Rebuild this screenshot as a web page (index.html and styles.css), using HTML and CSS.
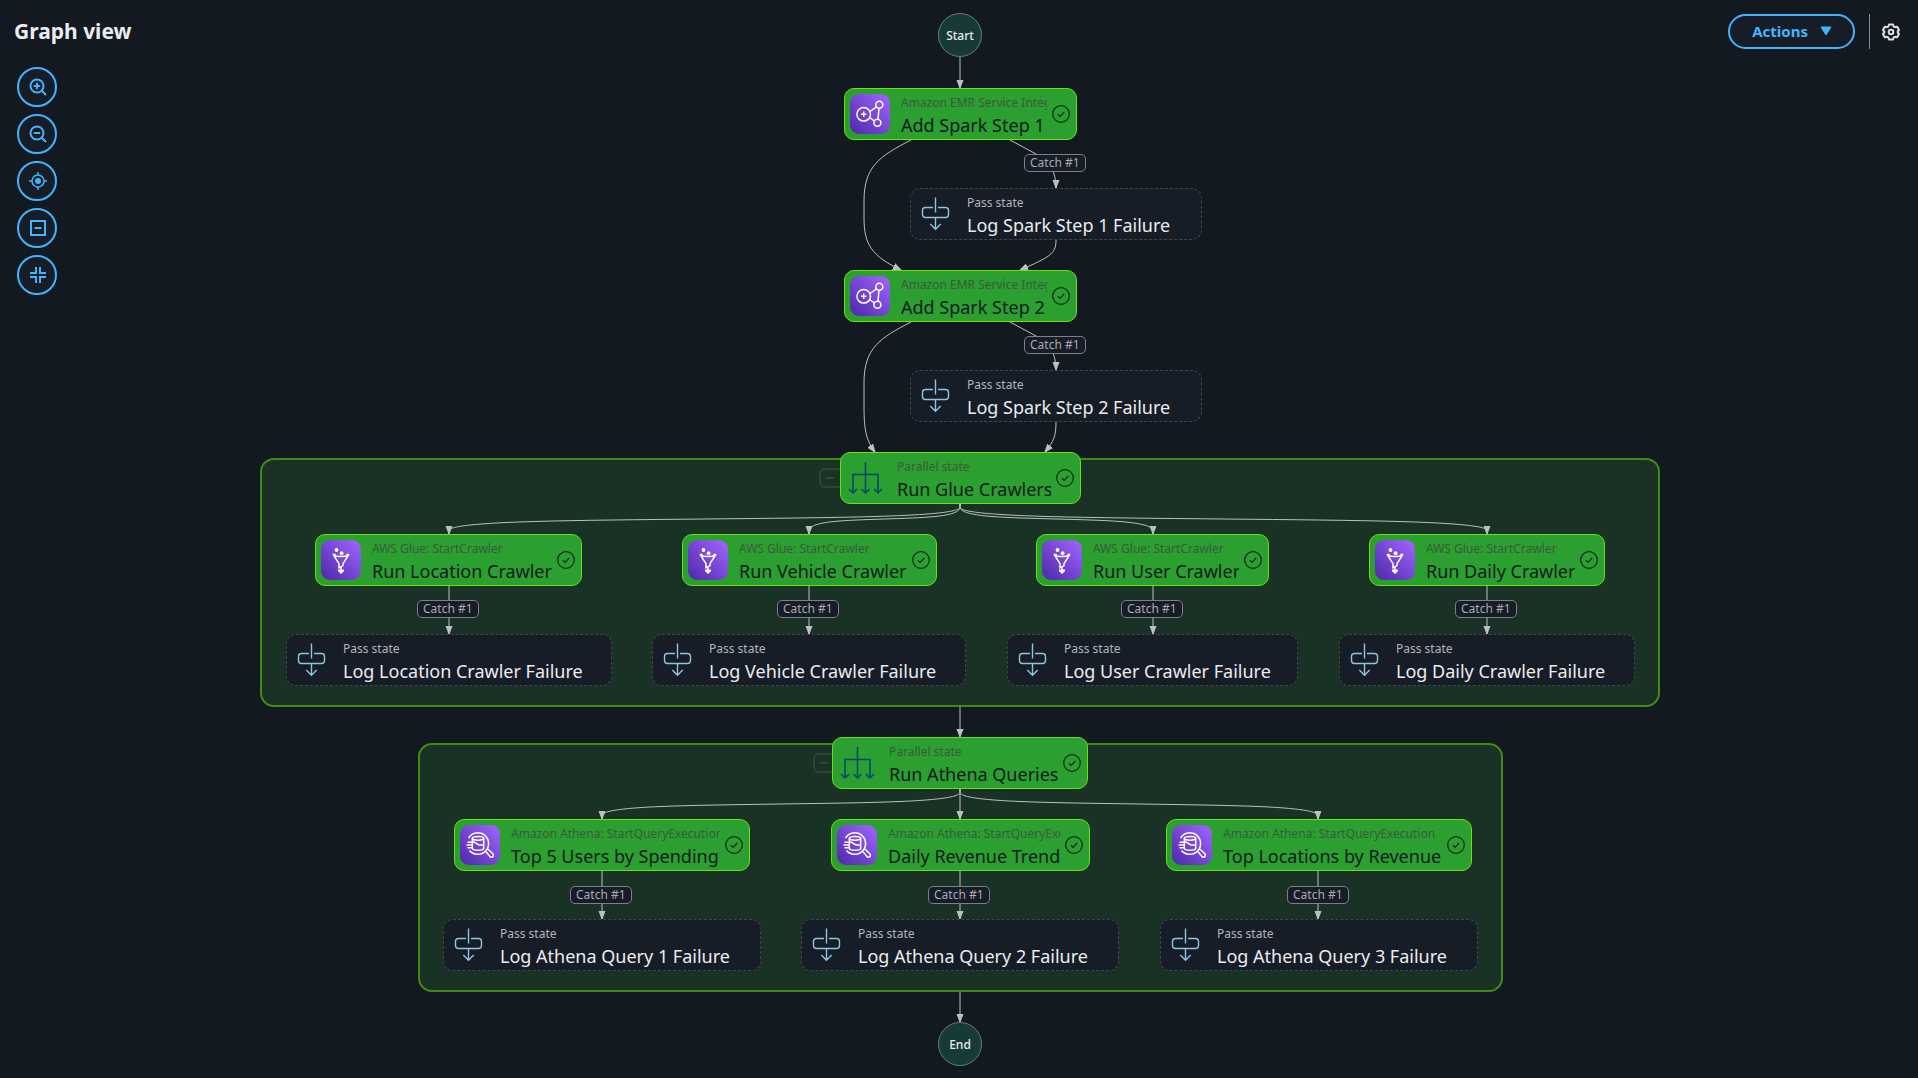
FILE: index.html
```html
<!DOCTYPE html>
<html lang="en">
<head>
<meta charset="utf-8">
<meta name="viewport" content="width=device-width, initial-scale=1">
<title>Graph view</title>
<link rel="stylesheet" href="styles.css">
</head>
<body>
<svg class="defs" aria-hidden="true">
  <defs>
    <linearGradient id="purple" x1="0" y1="1" x2="1" y2="0">
      <stop offset="0" stop-color="#4d27aa"/><stop offset="1" stop-color="#a166ff"/>
    </linearGradient>
    <symbol id="emr" viewBox="0 0 40 40">
      <rect width="40" height="40" rx="9" fill="url(#purple)"/>
      <g fill="none" stroke="#fff" stroke-width="1.5">
        <circle cx="13.7" cy="20.3" r="6.8"/><circle cx="29.3" cy="10.7" r="3.5"/><circle cx="27.4" cy="28.8" r="3.5"/>
        <path d="M20 17.5l6.500-4.600M19.600 23.500l4.700 3.300M29 14.200l-1 11.200M11 20.300h5.400M13.700 17.600v5.400"/>
      </g>
    </symbol>
    <symbol id="glue" viewBox="0 0 40 40">
      <rect width="40" height="40" rx="9" fill="url(#purple)"/>
      <g fill="none" stroke="#fff" stroke-width="1.500">
        <path d="M12.200 14.500L18 23.600v4.200l4-2.200v-2L27.800 14.500M12.500 15.500c3 1.300 12 1.300 15 0M11.700 14.500h3M25.300 14.500h3M20 27v5M17.200 30.200l2.800 2.800 2.800-2.800"/>
      </g>
      <g fill="#fff"><circle cx="15.500" cy="10" r="1.900"/><circle cx="20.600" cy="13.200" r="1.900"/><path d="M17 29.500h6l-3 4z"/></g>
    </symbol>
    <symbol id="athena" viewBox="0 0 40 40">
      <rect width="40" height="40" rx="9" fill="url(#purple)"/>
      <g fill="none" stroke="#fff" stroke-width="1.500">
        <path d="M8.500 13a10.800 10.800 0 1 1 1 12.500M25.500 26l2.200-2.200 5.100 5a1.800 1.800 0 0 1-2.800 2.800z"/>
        <ellipse cx="18" cy="13.300" rx="5.700" ry="1.900"/>
        <path d="M12.300 13.300v10c0 2.600 11.400 2.600 11.400 0v-10M13 16.500l6 3.500h5.500M7.500 17.300h4.500M6.500 20h5M7.500 22.700h4.500"/>
      </g>
    </symbol>
    <symbol id="pass" viewBox="0 0 40 40">
      <g fill="none" stroke="#8fc4e2" stroke-width="1.400">
        <path d="M19.500 3.500v15M17 13.500H9.500a3 3 0 0 0-3 3v4a3 3 0 0 0 3 3h20a3 3 0 0 0 3-3v-4a3 3 0 0 0-3-3H22M19.500 23.500v12M14.300 30.100l5.200 5.200 5.200-5.200"/>
      </g>
    </symbol>
    <symbol id="parallel" viewBox="0 0 40 40">
      <path fill="none" stroke="#05456b" stroke-width="1.500" d="M19.500 4v31M7 35V16.500h25V35M3 31l4 4 4-4M15.500 31l4 4 4-4M28 31l4 4 4-4"/>
    </symbol>
    <symbol id="check" viewBox="0 0 18 18">
      <g fill="none" stroke="#132a1c" stroke-width="1.200"><circle cx="9" cy="9" r="8.300"/><path d="M5.800 9.300l2.300 2.200 4.200-4.700"/></g>
    </symbol>
  </defs>
</svg>

<main class="view">
  <header class="bar">
    <h1 class="bar-title">Graph view</h1>
    <div class="bar-actions">
      <button class="actions" type="button">Actions
        <svg width="12" height="10" viewBox="0 0 12 10" aria-hidden="true"><path fill="#42b4ff" stroke="#42b4ff" stroke-linejoin="round" d="M1 1h10L6 9z"/></svg>
      </button>
      <span class="divider"></span>
      <button class="gear" type="button" aria-label="Settings">
        <svg width="18" height="18" viewBox="0 0 18 18" fill="none" stroke="#dedee3" stroke-width="2" stroke-linejoin="round"><path d="M7 1.500h4l.700 2 1.300.700 2.200-.500 1.800 3.300-1.300 1.500v1L17 11l-1.800 3.300-2.200-.500-1.300.700-.700 2H7l-.700-2-1.300-.700-2.200.500L1 11l1.300-1.500v-1L1 7l1.800-3.300L5 4.200l1.300-.700z"/><circle cx="9" cy="9" r="2.300"/></svg>
      </button>
    </div>
  </header>

  <nav class="tools" aria-label="Graph controls">
    <button class="tool" type="button" aria-label="Zoom in"><svg width="18" height="18" viewBox="0 0 18 18"><circle cx="8" cy="8" r="6.500"/><path d="M12.700 12.700l4.300 4.300M8 4.800v6.400M4.800 8h6.400"/></svg></button>
    <button class="tool" type="button" aria-label="Zoom out"><svg width="18" height="18" viewBox="0 0 18 18"><circle cx="8" cy="8" r="6.500"/><path d="M12.700 12.700l4.300 4.300M4.800 8h6.400"/></svg></button>
    <button class="tool" type="button" aria-label="Center graph"><svg class="thin" width="18" height="18" viewBox="0 0 18 18"><circle cx="9" cy="9" r="6"/><circle cx="9" cy="9" r="3" fill="#42b4ff" stroke="none"/><path d="M9 0v3M9 15v3M0 9h3M15 9h3"/></svg></button>
    <button class="tool" type="button" aria-label="Collapse all"><svg width="18" height="18" viewBox="0 0 18 18"><path d="M2 2h14v14H2zM5.500 9h7"/></svg></button>
    <button class="tool" type="button" aria-label="Exit full screen"><svg width="18" height="18" viewBox="0 0 18 18"><path d="M1 7h6V1M17 7h-6V1M1 11h6v6M17 11h-6v6"/></svg></button>
  </nav>

  <section class="graph" aria-label="Execution graph">
    <div class="group group-glue"></div>
    <div class="group group-athena"></div>
    <button class="collapse collapse-glue" type="button" aria-label="Collapse Run Glue Crawlers"></button>
    <button class="collapse collapse-athena" type="button" aria-label="Collapse Run Athena Queries"></button>

    <svg class="edges" viewBox="260 0 1398 1078" aria-hidden="true">
      <defs><marker id="arrow" markerUnits="userSpaceOnUse" markerWidth="8" markerHeight="8" refX="8" refY="4" orient="auto"><path d="M0 1L8 4L0 7z" fill="#bfbfbf"/></marker></defs>
      <path d="M960 57V88"/>
      <path d="M911 140C880 156 864 166 864 201V218C864 245 872 256 901 270"/>
      <path d="M1010 140L1036 154C1050 161 1056 172 1056 188"/>
      <path d="M1056 240C1056 254 1050 257 1020 270"/>
      <path d="M911 322C880 338 864 348 864 383V406C864 430 866 440 875 452"/>
      <path d="M1010 322L1036 336C1050 343 1056 354 1056 370"/>
      <path d="M1056 422C1056 436 1054 441 1045 452"/>
      <path d="M960 504V506.500C960 509 960 514 875 516.500S619 519 534 521.500S449 529 449 531V534"/>
      <path d="M960 504V506.500C960 509 960 514 935 516.500S859 519 834 521.500S809 529 809 531V534"/>
      <path d="M960 504V506.500C960 509 960 514 992 516.500S1088 519 1120 521.500S1153 529 1153 531V534"/>
      <path d="M960 504V506.500C960 509 960 514 1048 516.500S1311 519 1399 521.500S1487 529 1487 531V534"/>
      <path d="M449 586V634"/><path d="M809 586V634"/><path d="M1153 586V634"/><path d="M1487 586V634"/>
      <path d="M960 707V737"/>
      <path d="M960 789V791.500C960 794 960 799 900 801.500S721 804 661 806.500S602 814 602 816V819"/>
      <path d="M960 789V819"/>
      <path d="M960 789V791.500C960 794 960 799 1020 801.500S1198 804 1258 806.500S1318 814 1318 816V819"/>
      <path d="M602 871V919"/><path d="M960 871V919"/><path d="M1318 871V919"/>
      <path d="M960 992V1022"/>
    </svg>

    <div class="terminal start">Start</div>

    <article class="node done spark-1"><svg class="icon"><use href="#emr"/></svg><div class="text"><p class="kind">Amazon EMR Service Integration</p><h2 class="name">Add Spark Step 1</h2></div><svg class="check"><use href="#check"/></svg></article>
    <span class="catch catch-spark-1">Catch #1</span>
    <article class="node idle log-spark-1"><svg class="icon"><use href="#pass"/></svg><div class="text"><p class="kind">Pass state</p><h2 class="name">Log Spark Step 1 Failure</h2></div></article>

    <article class="node done spark-2"><svg class="icon"><use href="#emr"/></svg><div class="text"><p class="kind">Amazon EMR Service Integration</p><h2 class="name">Add Spark Step 2</h2></div><svg class="check"><use href="#check"/></svg></article>
    <span class="catch catch-spark-2">Catch #1</span>
    <article class="node idle log-spark-2"><svg class="icon"><use href="#pass"/></svg><div class="text"><p class="kind">Pass state</p><h2 class="name">Log Spark Step 2 Failure</h2></div></article>

    <article class="node done run-glue"><svg class="icon"><use href="#parallel"/></svg><div class="text"><p class="kind">Parallel state</p><h2 class="name">Run Glue Crawlers</h2></div><svg class="check"><use href="#check"/></svg></article>

    <article class="node done location"><svg class="icon"><use href="#glue"/></svg><div class="text"><p class="kind">AWS Glue: StartCrawler</p><h2 class="name">Run Location Crawler</h2></div><svg class="check"><use href="#check"/></svg></article>
    <span class="catch catch-location">Catch #1</span>
    <article class="node idle log-location"><svg class="icon"><use href="#pass"/></svg><div class="text"><p class="kind">Pass state</p><h2 class="name">Log Location Crawler Failure</h2></div></article>

    <article class="node done vehicle"><svg class="icon"><use href="#glue"/></svg><div class="text"><p class="kind">AWS Glue: StartCrawler</p><h2 class="name">Run Vehicle Crawler</h2></div><svg class="check"><use href="#check"/></svg></article>
    <span class="catch catch-vehicle">Catch #1</span>
    <article class="node idle log-vehicle"><svg class="icon"><use href="#pass"/></svg><div class="text"><p class="kind">Pass state</p><h2 class="name">Log Vehicle Crawler Failure</h2></div></article>

    <article class="node done user"><svg class="icon"><use href="#glue"/></svg><div class="text"><p class="kind">AWS Glue: StartCrawler</p><h2 class="name">Run User Crawler</h2></div><svg class="check"><use href="#check"/></svg></article>
    <span class="catch catch-user">Catch #1</span>
    <article class="node idle log-user"><svg class="icon"><use href="#pass"/></svg><div class="text"><p class="kind">Pass state</p><h2 class="name">Log User Crawler Failure</h2></div></article>

    <article class="node done daily"><svg class="icon"><use href="#glue"/></svg><div class="text"><p class="kind">AWS Glue: StartCrawler</p><h2 class="name">Run Daily Crawler</h2></div><svg class="check"><use href="#check"/></svg></article>
    <span class="catch catch-daily">Catch #1</span>
    <article class="node idle log-daily"><svg class="icon"><use href="#pass"/></svg><div class="text"><p class="kind">Pass state</p><h2 class="name">Log Daily Crawler Failure</h2></div></article>

    <article class="node done run-athena"><svg class="icon"><use href="#parallel"/></svg><div class="text"><p class="kind">Parallel state</p><h2 class="name">Run Athena Queries</h2></div><svg class="check"><use href="#check"/></svg></article>

    <article class="node done top-users"><svg class="icon"><use href="#athena"/></svg><div class="text"><p class="kind">Amazon Athena: StartQueryExecution</p><h2 class="name">Top 5 Users by Spending</h2></div><svg class="check"><use href="#check"/></svg></article>
    <span class="catch catch-users">Catch #1</span>
    <article class="node idle log-query-1"><svg class="icon"><use href="#pass"/></svg><div class="text"><p class="kind">Pass state</p><h2 class="name">Log Athena Query 1 Failure</h2></div></article>

    <article class="node done trend"><svg class="icon"><use href="#athena"/></svg><div class="text"><p class="kind">Amazon Athena: StartQueryExecution</p><h2 class="name">Daily Revenue Trend</h2></div><svg class="check"><use href="#check"/></svg></article>
    <span class="catch catch-trend">Catch #1</span>
    <article class="node idle log-query-2"><svg class="icon"><use href="#pass"/></svg><div class="text"><p class="kind">Pass state</p><h2 class="name">Log Athena Query 2 Failure</h2></div></article>

    <article class="node done top-locations"><svg class="icon"><use href="#athena"/></svg><div class="text"><p class="kind">Amazon Athena: StartQueryExecution</p><h2 class="name">Top Locations by Revenue</h2></div><svg class="check"><use href="#check"/></svg></article>
    <span class="catch catch-locations">Catch #1</span>
    <article class="node idle log-query-3"><svg class="icon"><use href="#pass"/></svg><div class="text"><p class="kind">Pass state</p><h2 class="name">Log Athena Query 3 Failure</h2></div></article>

    <div class="terminal end">End</div>
  </section>
</main>
</body>
</html>
```
FILE: styles.css
```css
* { box-sizing: border-box; }

body {
  margin: 0;
  background: #131920;
  color: #ebebf0;
  font-family: "Noto Sans", "Open Sans", sans-serif;
}

h1, h2, p { margin: 0; }
button { font: inherit; cursor: pointer; }
.defs { position: absolute; width: 0; height: 0; }

/* Header and tools share one grid area with the graph beneath them */
.view {
  display: grid;
  grid-template-rows: auto 1fr;
  min-height: 100vh;
}

.bar {
  grid-area: 1 / 1;
  z-index: 2;
  display: flex;
  justify-content: space-between;
  align-items: flex-start;
  padding: 14px 14px 0;
}
.bar-title { font-size: 21px; line-height: 34px; font-weight: 700; }
.bar-actions { display: flex; align-items: center; }

.actions {
  display: flex;
  align-items: center;
  gap: 12px;
  height: 35px;
  padding: 0 21px 2px 22px;
  border: 2px solid #42b4ff;
  border-radius: 20px;
  background: #161d26;
  color: #42b4ff;
  font-size: 15px;
  font-weight: 700;
}
.divider { width: 1px; height: 35px; margin: 0 12px 0 14px; background: #8c8c94; }
.gear { display: flex; width: 22px; padding: 0; border: 0; background: none; }

.tools {
  grid-area: 2 / 1;
  justify-self: start;
  z-index: 2;
  display: flex;
  flex-direction: column;
  gap: 7px;
  padding: 18px 17px;
}
.tool {
  display: grid;
  place-items: center;
  width: 40px;
  height: 40px;
  padding: 0 0 0 2px;
  border: 2px solid #42b4ff;
  border-radius: 50%;
  background: #161d26;
}
.tool svg { fill: none; stroke: #42b4ff; stroke-width: 2; }
.tool .thin { stroke-width: 1.5; }

.graph {
  grid-area: 1 / 1 / 3 / 2;
  position: relative;
  justify-self: center;
  width: 1398px;
  height: 1078px;
}
.edges {
  position: absolute;
  inset: 0;
  overflow: visible;
  fill: none;
  stroke: #bfbfbf;
  stroke-width: 1;
}
.edges > path { marker-end: url(#arrow); }

.group {
  position: absolute;
  height: 249px;
  border: 2px solid #438a14;
  border-radius: 14px;
  background: #1a3225;
}
.group-glue { left: 0; top: 458px; width: 1400px; }
.group-athena { left: 158px; top: 743px; width: 1085px; }

.collapse {
  position: absolute;
  width: 24px;
  height: 20px;
  padding: 0;
  border: 2px solid #2c4535;
  border-radius: 6px;
  background: none;
}
.collapse::before {
  content: "";
  display: block;
  width: 8px;
  height: 2px;
  margin: 0 5px;
  background: #2f4838;
}
.collapse-glue { left: 559px; top: 468px; }
.collapse-athena { left: 553px; top: 753px; }

.terminal {
  position: absolute;
  left: 678px;
  width: 44px;
  height: 44px;
  border: 1px solid #6b7780;
  border-radius: 50%;
  background: #153a38;
  font-size: 12px;
  line-height: 43px;
  font-weight: 500;
  text-align: center;
}
.start { top: 13px; }
.end { top: 1022px; }

.node {
  position: absolute;
  display: flex;
  align-items: center;
  height: 52px;
  padding: 0 6px 0 5px;
  border: 1px solid;
  border-radius: 10px;
}
.node.done { border-color: #67e40c; background: #2b9f2f; color: #0f1b20; }
.node.idle { border: 1px dashed #424650; background: #161d26; }
.icon { flex: none; width: 40px; height: 40px; margin-right: 11px; }
.check { flex: none; width: 18px; height: 18px; margin-left: 5px; }
.text { flex: 1; min-width: 0; overflow: hidden; white-space: nowrap; }
.kind { font-size: 12px; line-height: 22px; }
.name { font-size: 18px; line-height: 22px; font-weight: 400; }
.done .kind { color: #3b5a41; }
.idle .kind { color: #b4b4bb; }

.catch {
  position: absolute;
  width: 62px;
  height: 18px;
  border: 1px solid #7d8089;
  border-radius: 5px;
  background: #161d26;
  color: #a9a9b2;
  font-size: 12px;
  line-height: 16px;
  padding-left: 5px;
}

/* Node placement on the canvas */
.spark-1 { left: 584px; top: 88px; width: 233px; }
.catch-spark-1 { left: 764px; top: 154px; }
.log-spark-1 { left: 650px; top: 188px; width: 292px; }
.spark-2 { left: 584px; top: 270px; width: 233px; }
.catch-spark-2 { left: 764px; top: 336px; }
.log-spark-2 { left: 650px; top: 370px; width: 292px; }

.run-glue { left: 580px; top: 452px; width: 241px; }
.location { left: 55px; top: 534px; width: 267px; }
.vehicle { left: 422px; top: 534px; width: 255px; }
.user { left: 776px; top: 534px; width: 233px; }
.daily { left: 1109px; top: 534px; width: 236px; }
.catch-location { left: 157px; top: 600px; }
.catch-vehicle { left: 517px; top: 600px; }
.catch-user { left: 861px; top: 600px; }
.catch-daily { left: 1195px; top: 600px; }
.log-location { left: 26px; top: 634px; width: 326px; }
.log-vehicle { left: 392px; top: 634px; width: 314px; }
.log-user { left: 747px; top: 634px; width: 291px; }
.log-daily { left: 1079px; top: 634px; width: 296px; }

.run-athena { left: 572px; top: 737px; width: 256px; }
.top-users { left: 194px; top: 819px; width: 296px; }
.trend { left: 571px; top: 819px; width: 259px; }
.top-locations { left: 906px; top: 819px; width: 306px; }
.catch-users { left: 310px; top: 886px; }
.catch-trend { left: 668px; top: 886px; }
.catch-locations { left: 1027px; top: 886px; }
.log-query-1 { left: 183px; top: 919px; width: 318px; }
.log-query-2 { left: 541px; top: 919px; width: 318px; }
.log-query-3 { left: 900px; top: 919px; width: 318px; }
```
